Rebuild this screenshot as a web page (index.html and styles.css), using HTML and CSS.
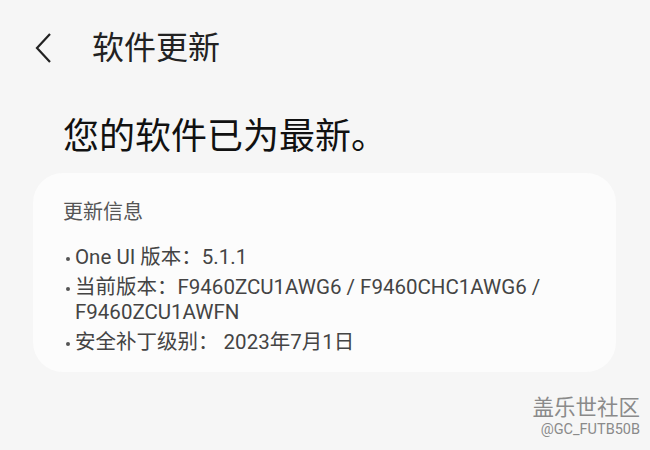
FILE: index.html
```html
<!DOCTYPE html>
<html lang="zh-CN">
<head>
    <meta charset="UTF-8">
    <title>软件更新</title>
    <link rel="stylesheet" href="styles.css">
</head>
<body>

<div class="screen">
    <header class="topbar">
        <svg class="back" width="20" height="32" viewBox="0 0 20 32">
            <path d="M16 2 L3 16 L16 30" fill="none" stroke="#222" stroke-width="2.2"/>
        </svg>
        <span class="title">软件更新</span>
    </header>

    <h1 class="status">您的软件已为最新。</h1>

    <section class="card">
        <div class="card-title">更新信息</div>
        <ul class="info">
            <li>One UI 版本：5.1.1</li>
            <li>当前版本：F9460ZCU1AWG6 / F9460CHC1AWG6 / F9460ZCU1AWFN</li>
            <li>安全补丁级别： 2023年7月1日</li>
        </ul>
    </section>

    <div class="mark">
        <div class="mark-name">盖乐世社区</div>
        <div class="mark-id">@GC_FUTB50B</div>
    </div>
</div>

</body>
</html>
```

FILE: styles.css
```css
body {
    margin: 0;
    background-color: #f6f6f6;
    font-family: Roboto, "Noto Sans CJK SC", sans-serif;
    color: #222;
}

.screen {
    width: 650px;
    height: 450px;
    position: relative;
    overflow: hidden;
}

.topbar {
    display: flex;
    align-items: center;
    height: 96px;
    padding-left: 34px;
}

.back {
    margin-right: 38px;
}

.title {
    font-size: 32px;
    line-height: 40px;
    color: #222;
}

.status {
    margin: 19px 0 0 63px;
    font-size: 36px;
    font-weight: normal;
    color: #111;
    line-height: 44px;
}

.card {
    margin: 14px 34px 0 33px;
    padding: 26px 30px 12px 30px;
    background-color: #fcfcfc;
    border-radius: 30px;
}

.card-title {
    font-size: 20px;
    color: #555;
    line-height: 26px;
}

.info {
    list-style: none;
    margin: 20px 0 0 0;
    padding: 0;
    font-size: 20.5px;
    color: #444;
    line-height: 25px;
}

.info li {
    position: relative;
    padding-left: 12px;
    margin-bottom: 5px;
}

.info li::before {
    content: "";
    position: absolute;
    left: 3px;
    top: 12px;
    width: 4px;
    height: 4px;
    border-radius: 50%;
    background-color: #555;
}

.mark {
    position: absolute;
    right: 10px;
    bottom: 10px;
    text-align: right;
    color: #8a8a8a;
}

.mark-name {
    font-size: 21.5px;
    line-height: 24px;
}

.mark-id {
    font-size: 14.5px;
    line-height: 20px;
}
```
